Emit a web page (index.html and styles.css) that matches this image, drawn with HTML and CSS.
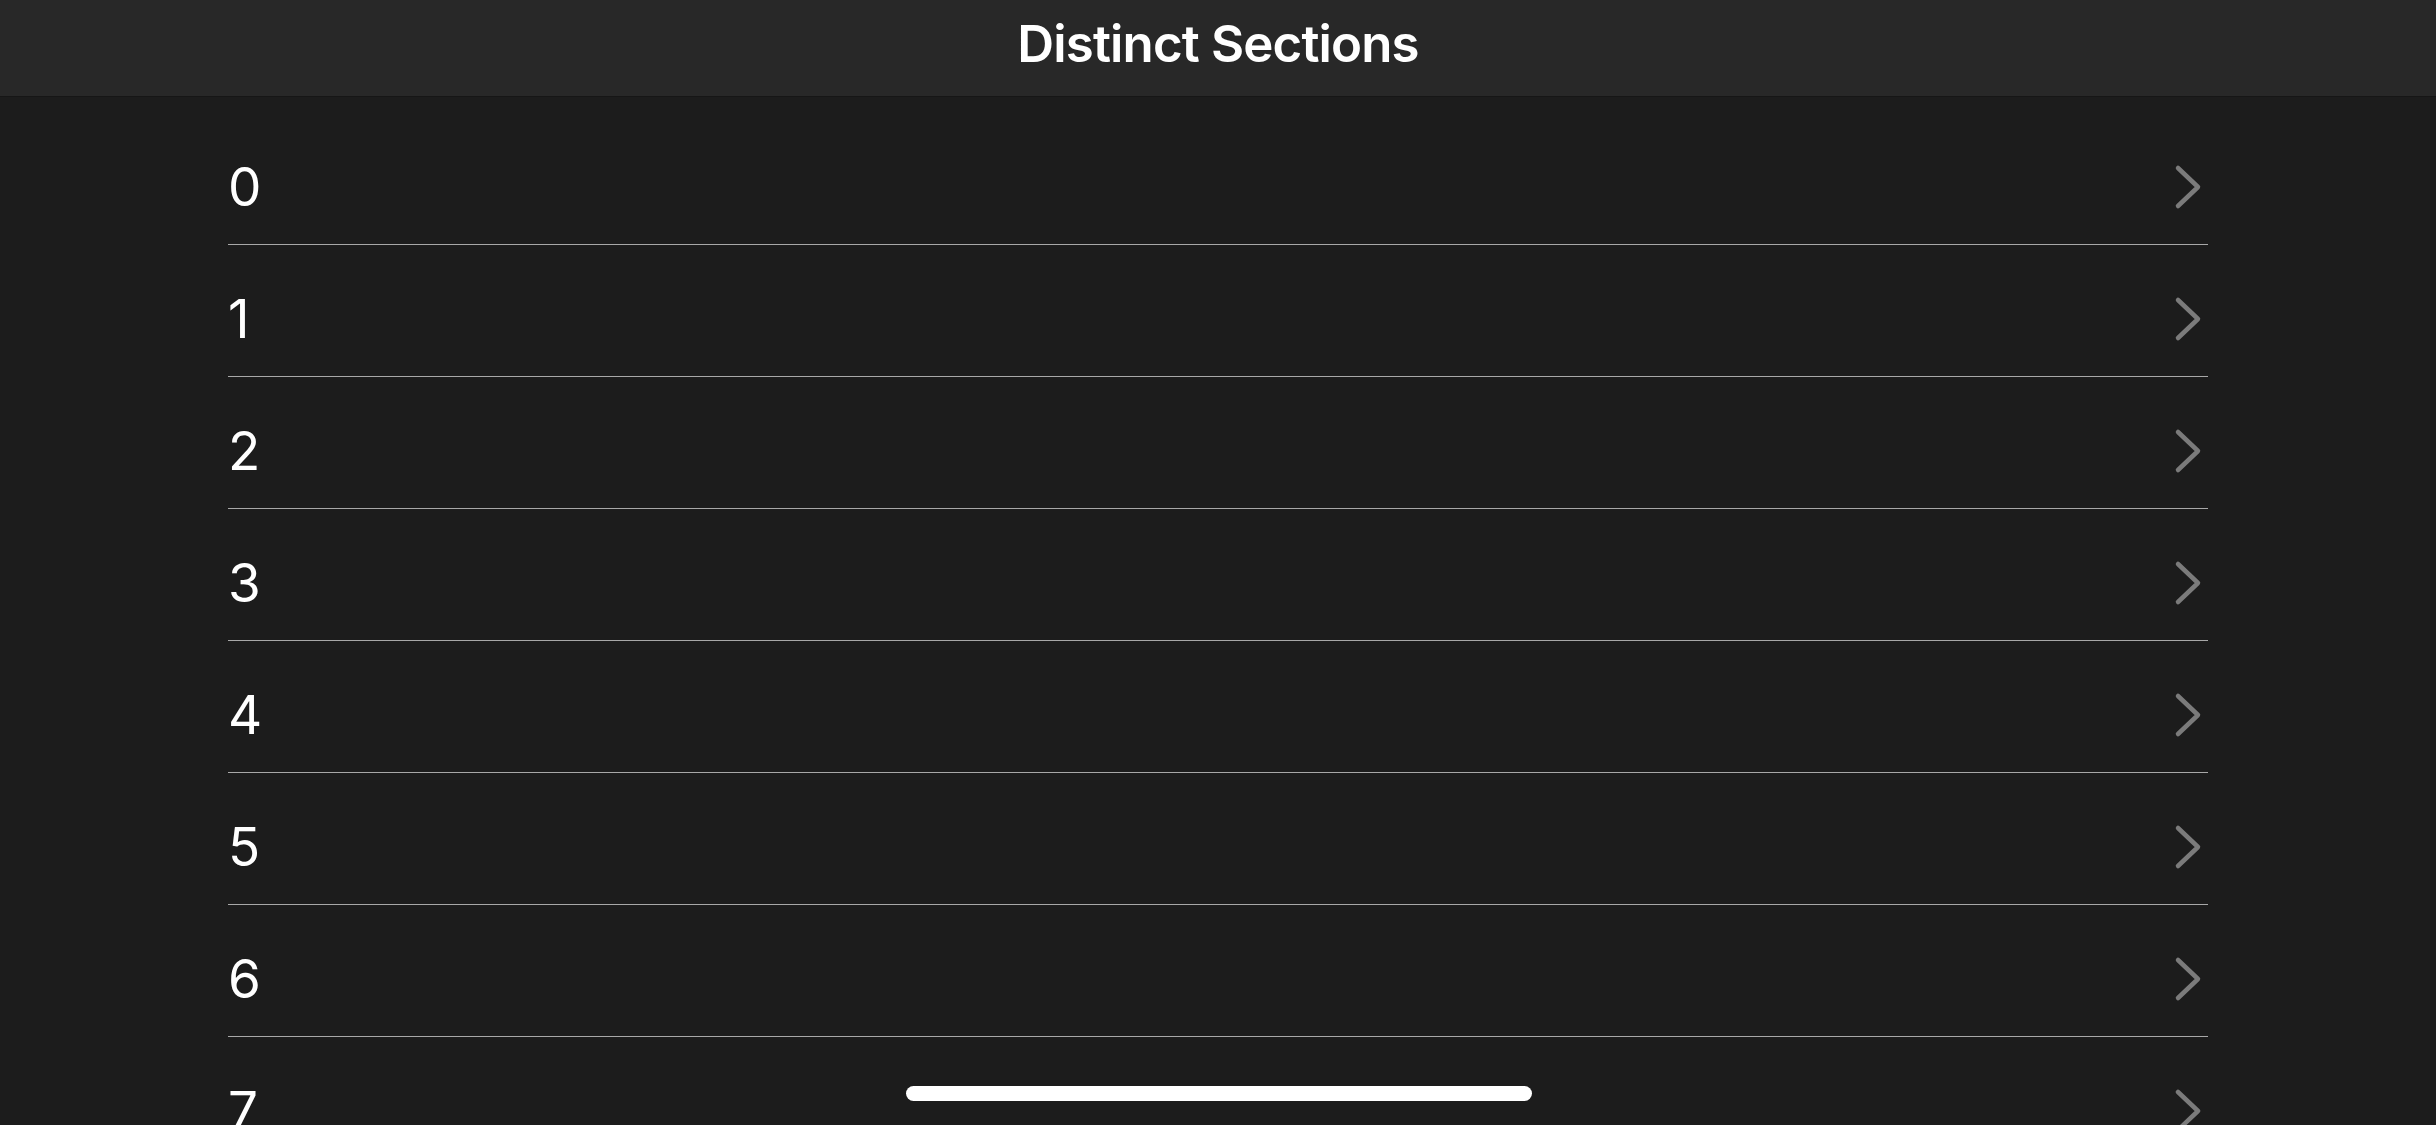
FILE: index.html
```html
<!DOCTYPE html>
<html>
<head>
<meta charset="utf-8">
<link rel="stylesheet" href="styles.css">
</head>
<body>
<header class="navbar"><h1 class="title">Distinct Sections</h1></header>
<main class="list">
  <div class="row"><span class="label">0</span><svg class="chev" viewBox="0 0 30 48" width="30" height="48"><path d="M5 5 L25 24 L5 43"/></svg></div>
  <div class="row"><span class="label">1</span><svg class="chev" viewBox="0 0 30 48" width="30" height="48"><path d="M5 5 L25 24 L5 43"/></svg></div>
  <div class="row"><span class="label">2</span><svg class="chev" viewBox="0 0 30 48" width="30" height="48"><path d="M5 5 L25 24 L5 43"/></svg></div>
  <div class="row"><span class="label">3</span><svg class="chev" viewBox="0 0 30 48" width="30" height="48"><path d="M5 5 L25 24 L5 43"/></svg></div>
  <div class="row"><span class="label">4</span><svg class="chev" viewBox="0 0 30 48" width="30" height="48"><path d="M5 5 L25 24 L5 43"/></svg></div>
  <div class="row"><span class="label">5</span><svg class="chev" viewBox="0 0 30 48" width="30" height="48"><path d="M5 5 L25 24 L5 43"/></svg></div>
  <div class="row"><span class="label">6</span><svg class="chev" viewBox="0 0 30 48" width="30" height="48"><path d="M5 5 L25 24 L5 43"/></svg></div>
  <div class="row"><span class="label">7</span><svg class="chev" viewBox="0 0 30 48" width="30" height="48"><path d="M5 5 L25 24 L5 43"/></svg></div>
</main>
<div class="home-indicator"></div>
</body>
</html>
```
FILE: styles.css
```css
html, body {
  margin: 0;
  padding: 0;
}
body {
  width: 2436px;
  height: 1125px;
  overflow: hidden;
  background: #1c1c1c;
  font-family: Inter, "Noto Sans", sans-serif;
  color: #ffffff;
}
.navbar {
  height: 87px;
  padding-bottom: 9px;
  background: #282828;
  border-bottom: 1px solid #161616;
  display: flex;
  align-items: center;
  justify-content: center;
}
.title {
  margin: 0;
  font-size: 51px;
  font-weight: 600;
  letter-spacing: -0.85px;
  line-height: 1;
}
.list {
  margin: 16px 228px 0 228px;
}
.row {
  height: 114px;
  padding-top: 17px;
  border-bottom: 1px solid #a8a8a8;
  display: flex;
  align-items: center;
  justify-content: space-between;
}
.label {
  font-size: 53px;
  font-weight: 400;
  line-height: 1;
}
.chev {
  margin-right: 5px;
  fill: none;
  stroke: #7b7b7b;
  stroke-width: 4.5;
  stroke-linecap: round;
  stroke-linejoin: round;
}
.home-indicator {
  position: absolute;
  left: 906px;
  top: 1086px;
  width: 626px;
  height: 15px;
  border-radius: 8px;
  background: #ffffff;
}
```
